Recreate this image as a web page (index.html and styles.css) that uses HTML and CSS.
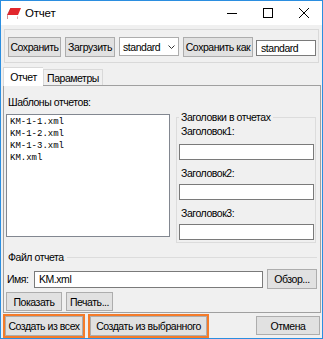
FILE: index.html
```html
<!DOCTYPE html>
<html lang="ru">
<head>
<meta charset="utf-8">
<title>Отчет</title>
<link rel="stylesheet" href="styles.css">
</head>
<body>
<div class="window">
  <header class="titlebar">
    <svg class="app-icon" width="14" height="11" viewBox="0 0 14 11">
      <path d="M3.5 0H14L11 7H0.5Z" fill="#e2262c"/>
      <path d="M0.5 7H11L10.6 8.4H0.5Z" fill="#ffffff"/>
      <path d="M0 7.2L0.5 7V11H10L10.6 8.4H11L10.3 11H0Z" fill="#a81c22"/>
      <path d="M0 7L3.5 0L4 0L0.7 7Z" fill="#b81f25"/>
    </svg>
    <span class="title">Отчет</span>
    <div class="caption">
      <span class="cap"><svg width="10" height="10" viewBox="0 0 10 10"><path d="M0 5.5H10" stroke="#000"/></svg></span>
      <span class="cap"><svg width="10" height="10" viewBox="0 0 10 10"><rect x="0.5" y="0.5" width="9" height="9" fill="none" stroke="#000"/></svg></span>
      <span class="cap"><svg width="10" height="10" viewBox="0 0 10 10"><path d="M0 0L10 10M10 0L0 10" stroke="#000"/></svg></span>
    </div>
  </header>
  <main class="client">
    <div class="toolbar">
      <button class="btn w-save">Сохранить</button>
      <button class="btn w-load">Загрузить</button>
      <div class="combo"><span>standard</span><svg class="chev" width="7" height="4" viewBox="0 0 7 4"><path d="M0.5 0.5L3.5 3.5L6.5 0.5" fill="none" stroke="#333"/></svg></div>
      <button class="btn w-saveas">Сохранить как</button>
      <div class="textbox preset">standard</div>
    </div>
    <div class="tabs">
      <div class="tab active">Отчет</div>
      <div class="tab">Параметры</div>
    </div>
    <div class="tabpanel">
      <div class="top-row">
        <div class="templates">
          <div class="label templates-label">Шаблоны отчетов:</div>
          <div class="listbox">
            <div class="item">KM-1-1.xml</div>
            <div class="item">KM-1-2.xml</div>
            <div class="item">KM-1-3.xml</div>
            <div class="item">KM.xml</div>
          </div>
        </div>
        <fieldset class="group">
          <legend>Заголовки в отчетах</legend>
          <div class="label glabel first">Заголовок1:</div>
          <div class="textbox field"></div>
          <div class="label glabel">Заголовок2:</div>
          <div class="textbox field"></div>
          <div class="label glabel">Заголовок3:</div>
          <div class="textbox field"></div>
        </fieldset>
      </div>
      <div class="section-title"><span>Файл отчета</span><span class="rule"></span></div>
      <div class="file-row">
        <span class="label name-label">Имя:</span>
        <div class="textbox name-box">KM.xml</div>
        <button class="btn browse">Обзор...</button>
      </div>
      <div class="action-row">
        <button class="btn show">Показать</button>
        <button class="btn print">Печать...</button>
      </div>
    </div>
    <div class="footer">
      <div class="highlight hl-all"><button class="btn">Создать из всех</button></div>
      <div class="highlight hl-sel"><button class="btn">Создать из выбранного</button></div>
      <button class="btn cancel">Отмена</button>
    </div>
  </main>
</div>
</body>
</html>
```

FILE: styles.css
```css
* { box-sizing: border-box; }
html, body { margin: 0; padding: 0; }
body {
  width: 323px;
  height: 339px;
  overflow: hidden;
  background: #fff;
  font-family: "Liberation Sans", Arial, sans-serif;
  font-size: 10.5px;
  letter-spacing: -0.45px;
  color: #000;
}
.window {
  width: 323px;
  height: 339px;
  border: 1px solid #2b8ee0;
  background: #f0f0f0;
  display: flex;
  flex-direction: column;
}
.titlebar {
  flex: none;
  height: 24px;
  background: #fff;
  display: flex;
  align-items: center;
}
.app-icon { margin-left: 6px; flex: none; }
.title { margin-left: 4px; font-size: 11.5px; letter-spacing: -0.2px; }
.caption { margin-left: auto; display: flex; height: 100%; }
.cap { width: 36px; display: flex; align-items: center; justify-content: center; }
.cap svg { display: block; }

.client { flex: 1; display: flex; flex-direction: column; }

.btn {
  display: flex;
  align-items: center;
  justify-content: center;
  height: 20px;
  padding: 0;
  margin: 0;
  border: 1px solid #adadad;
  background: #e1e1e1;
  font: inherit;
  letter-spacing: inherit;
  color: #000;
  white-space: nowrap;
  flex: none;
}
.textbox {
  background: #fff;
  border: 1px solid #7a7a7a;
  display: flex;
  align-items: center;
  white-space: nowrap;
}

.toolbar {
  flex: none;
  margin: 4px 3px 0;
  height: 34px;
  border: 1px solid #d9d9d9;
  padding: 7px 0 0 3px;
  display: flex;
  align-items: flex-start;
}
.w-save { width: 53px; }
.w-load { width: 50px; margin-left: 4px; }
.combo {
  margin-left: 4px;
  width: 60px;
  height: 19px;
  background: #fff;
  border: 1px solid #adadad;
  display: flex;
  align-items: center;
  padding-left: 3px;
}
.chev { margin-left: auto; margin-right: 3px; }
.w-saveas { width: 70px; margin-left: 4px; }
.preset {
  width: 60px;
  height: 16px;
  margin-top: 3px;
  margin-left: 3px;
  padding-left: 4px;
}

.tabs {
  flex: none;
  margin: 4px 0 0 2px;
  height: 18px;
  display: flex;
  align-items: flex-end;
}
.tab {
  height: 16px;
  border: 1px solid #d9d9d9;
  border-bottom: none;
  display: flex;
  align-items: center;
  justify-content: center;
  width: 60px;
  background: #f0f0f0;
}
.tab.active {
  position: relative;
  z-index: 1;
  width: 40px;
  height: 19px;
  margin-bottom: -1px;
  background: #fff;
  border-right: none;
}

.tabpanel {
  flex: none;
  margin: 0 1px 0 2px;
  height: 228px;
  border: 1px solid #a0a0a0;
  padding: 9px 0 0 0;
  display: flex;
  flex-direction: column;
}
.top-row { display: flex; align-items: flex-start; padding-left: 2px; }
.templates { width: 164px; flex: none; }
.label { line-height: 14px; height: 14px; white-space: nowrap; }
.templates-label { padding-left: 2px; }
.listbox {
  margin-top: 5px;
  height: 123px;
  background: #fff;
  border: 1px solid #828790;
  padding: 1px 3px;
  font-family: "Liberation Mono", "Courier New", monospace;
  font-size: 9px;
  letter-spacing: 0;
  color: #000;
}
.item { height: 12px; line-height: 12px; }

.group {
  margin: 16px 0 0 6px;
  width: 140px;
  min-width: 0;
  border: 1px solid #dcdcdc;
  padding: 0 1px 2px 2px;
}
.group legend {
  padding: 0 2px;
  margin-left: 0;
  line-height: 13px;
  height: 13px;
}
.glabel { padding-left: 2px; margin-top: 6px; }
.glabel.first { margin-top: 0; }
.field { width: 135px; height: 16px; margin-top: 4px; }
.glabel.first + .field { margin-top: 6px; }

.section-title {
  margin-top: 8px;
  padding: 0 3px 0 4px;
  display: flex;
  align-items: center;
  height: 13px;
  line-height: 13px;
}
.rule { flex: 1; margin-left: 3px; border-top: 1px solid #dcdcdc; }

.file-row {
  margin-top: 5px;
  padding-left: 3px;
  display: flex;
  align-items: center;
  height: 20px;
}
.name-label { width: 27px; }
.name-box { width: 229px; height: 17px; padding-left: 4px; }
.browse { width: 50px; margin-left: 4px; }

.action-row { margin-top: 3px; padding-left: 2px; display: flex; }
.show { width: 56px; height: 19px; }
.print { width: 47px; height: 19px; margin-left: 4px; }

.footer {
  flex: 1;
  display: flex;
  align-items: center;
  padding: 0 2px;
}
.highlight {
  border: 2px solid #f47b2a;
  display: flex;
}
.highlight .btn { height: 20px; width: 100%; }
.hl-all { width: 82px; }
.hl-sel { width: 121px; margin-left: 3px; }
.cancel { margin-left: auto; width: 64px; height: 19px; }
```
